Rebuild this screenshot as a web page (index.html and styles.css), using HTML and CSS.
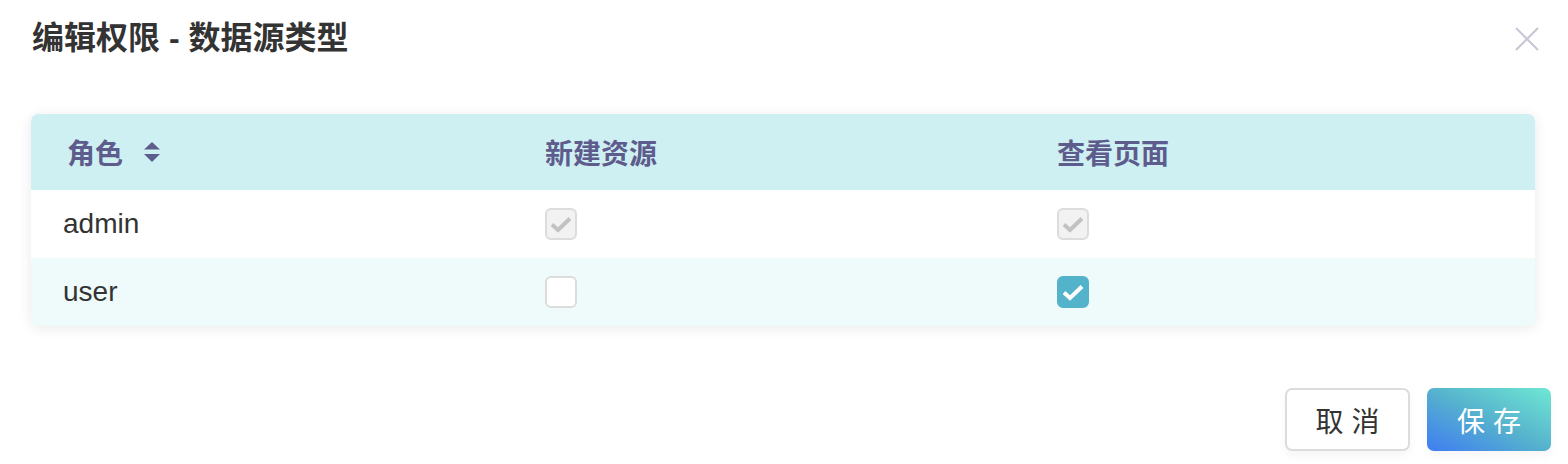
FILE: index.html
```html
<!DOCTYPE html>
<html lang="zh-CN">
<head>
    <meta charset="UTF-8">
    <meta name="viewport" content="width=device-width, initial-scale=1.0">
    <title>编辑权限 - 数据源类型</title>
    <link rel="stylesheet" href="styles.css">
</head>
<body>

<div class="dialog">
    <div class="dialog-header">
        <h2 class="dialog-title">编辑权限 - 数据源类型</h2>
        <span class="close-btn">
            <svg width="24" height="24" viewBox="0 0 24 24">
                <path d="M1 1 L23 23 M23 1 L1 23" stroke="#c6c6d6" stroke-width="2" fill="none"/>
            </svg>
        </span>
    </div>

    <div class="dialog-body">
        <div class="perm-table">
            <div class="row head">
                <div class="cell first">角色
                    <span class="sort">
                        <svg width="18" height="22" viewBox="0 0 18 22">
                            <path d="M9 1 L17 8.5 L1 8.5 Z" fill="#5d5c8c"/>
                            <path d="M1 13 L17 13 L9 21 Z" fill="#5d5c8c"/>
                        </svg>
                    </span>
                </div>
                <div class="cell">新建资源</div>
                <div class="cell">查看页面</div>
            </div>
            <div class="row">
                <div class="cell first name">admin</div>
                <div class="cell"><span class="check disabled"><svg viewBox="0 0 28 28"><path d="M5 14.5 L11 20 L23 8.5" stroke="#c2c2c2" stroke-width="4" fill="none"/></svg></span></div>
                <div class="cell"><span class="check disabled"><svg viewBox="0 0 28 28"><path d="M5 14.5 L11 20 L23 8.5" stroke="#c2c2c2" stroke-width="4" fill="none"/></svg></span></div>
            </div>
            <div class="row striped">
                <div class="cell first name">user</div>
                <div class="cell"><span class="check"></span></div>
                <div class="cell"><span class="check on"><svg viewBox="0 0 28 28"><path d="M5 14.5 L11 20 L23 8.5" stroke="#fff" stroke-width="4" fill="none"/></svg></span></div>
            </div>
        </div>
    </div>

    <div class="dialog-footer">
        <button class="btn cancel">取消</button>
        <button class="btn save">保存</button>
    </div>
</div>

</body>
</html>
```

FILE: styles.css
```css
body {
    margin: 0;
    background-color: #fff;
    font-family: 'Liberation Sans', 'Noto Sans CJK SC', sans-serif;
    color: #333;
}
.dialog {
    width: 1568px;
    height: 464px;
}
.dialog-header {
    height: 76px;
    display: flex;
    justify-content: space-between;
    align-items: center;
    padding: 0 29px 0 32px;
}
.dialog-title {
    margin: 0;
    font-size: 32px;
    font-weight: bold;
    color: #333;
    line-height: 1;
}
.close-btn {
    display: flex;
    margin-top: 2px;
}
.dialog-body {
    padding: 38px 33px 0 31px;
}
.perm-table {
    border-radius: 7px;
    overflow: hidden;
    box-shadow: 0 2px 14px rgba(0, 0, 0, 0.09);
}
.row {
    display: grid;
    grid-template-columns: 514px 512px 1fr;
    height: 68px;
    align-items: center;
    background-color: #fff;
}
.row.head {
    height: 76px;
    background-color: #cff0f3;
    color: #5d5c8c;
    font-size: 28px;
    font-weight: bold;
}
.row.striped {
    background-color: #effafb;
}
.cell {
    display: flex;
    align-items: center;
}
.cell.first {
    padding-left: 36px;
}
.cell.name {
    padding-left: 32px;
    font-size: 28px;
    color: #333;
}
.sort {
    display: flex;
    margin-left: 20px;
}
.check {
    display: block;
    width: 28px;
    height: 28px;
    border: 2px solid #dcdcdc;
    border-radius: 6px;
    background-color: #fff;
}
.check svg {
    display: block;
    width: 28px;
    height: 28px;
}
.check.disabled {
    background-color: #f2f2f2;
}
.check.on {
    background-color: #53b3cb;
    border-color: #53b3cb;
}
.dialog-footer {
    display: flex;
    justify-content: flex-end;
    gap: 17px;
    padding: 62px 17px 0 0;
}
.btn {
    height: 63px;
    border-radius: 7px;
    font-family: 'Noto Sans CJK SC', sans-serif;
    font-size: 28px;
    letter-spacing: 8px;
    padding: 0 0 0 8px;
    cursor: pointer;
    box-shadow: 0 5px 8px rgba(0, 0, 0, 0.04);
}
.btn.cancel {
    width: 125px;
    background-color: #fff;
    border: 2px solid #dcdcdc;
    color: #333;
}
.btn.save {
    width: 124px;
    border: none;
    color: #fff;
    background: linear-gradient(to top right, #3f7cf3, #56b2cd 50%, #6fe8d3);
}
```
